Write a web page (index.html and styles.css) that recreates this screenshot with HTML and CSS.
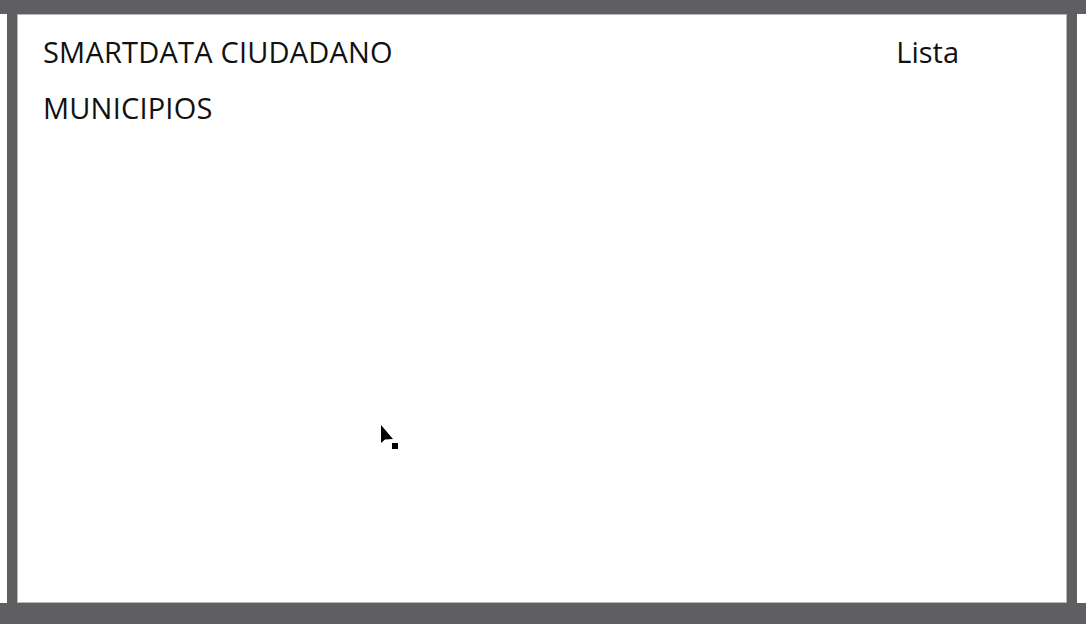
FILE: index.html
```html
<!DOCTYPE html>
<html lang="es">
<head>
<meta charset="utf-8">
<title>SmartData Ciudadano</title>
<link rel="stylesheet" href="styles.css">
</head>
<body>
<div class="screen">
  <div class="bar-top"></div>
  <div class="middle">
    <div class="edge-left"></div>
    <div class="rail"></div>
    <main class="panel">
      <header class="head">
        <div class="titles">
          <div class="title">SMARTDATA CIUDADANO</div>
          <div class="title">MUNICIPIOS</div>
        </div>
        <div class="nav">Lista</div>
      </header>
      <svg class="cursor" width="20" height="28" viewBox="0 0 20 28">
        <path d="M1 1 L1 19 L5 15.5 L13 15 Z" fill="#000"/>
        <rect x="12" y="19" width="6" height="6" fill="#000"/>
      </svg>
    </main>
    <div class="rail"></div>
    <div class="edge-right"></div>
  </div>
  <div class="bar-bottom"></div>
</div>
</body>
</html>
```
FILE: styles.css
```css
html, body {
  margin: 0;
  padding: 0;
  background: #ffffff;
}
.screen {
  width: 1086px;
  height: 624px;
  display: flex;
  flex-direction: column;
  overflow: hidden;
}
.bar-top {
  height: 14px;
  background: #5f5f61;
  flex: none;
}
.middle {
  flex: 1;
  display: flex;
  min-height: 0;
}
.edge-left {
  width: 7px;
  background: #ffffff;
}
.edge-right {
  width: 9px;
  background: #ffffff;
}
.rail {
  width: 10px;
  background: #5f5f61;
}
.panel {
  flex: 1;
  position: relative;
  background: #ffffff;
  border: 1px solid #b8b8b8;
}
.bar-bottom {
  height: 21px;
  background: #5f5f61;
  flex: none;
}
.head {
  display: flex;
  justify-content: space-between;
  align-items: flex-start;
  padding: 9px 107px 0 25px;
  font-family: "Open Sans", sans-serif;
  color: #111;
}
.titles {
  display: flex;
  flex-direction: column;
}
.title {
  font-size: 29px;
  line-height: 56px;
  letter-spacing: 0.2px;
}
.nav {
  font-size: 29px;
  line-height: 56px;
  margin-top: 0;
}
.cursor {
  position: absolute;
  left: 362px;
  top: 409px;
}
```
